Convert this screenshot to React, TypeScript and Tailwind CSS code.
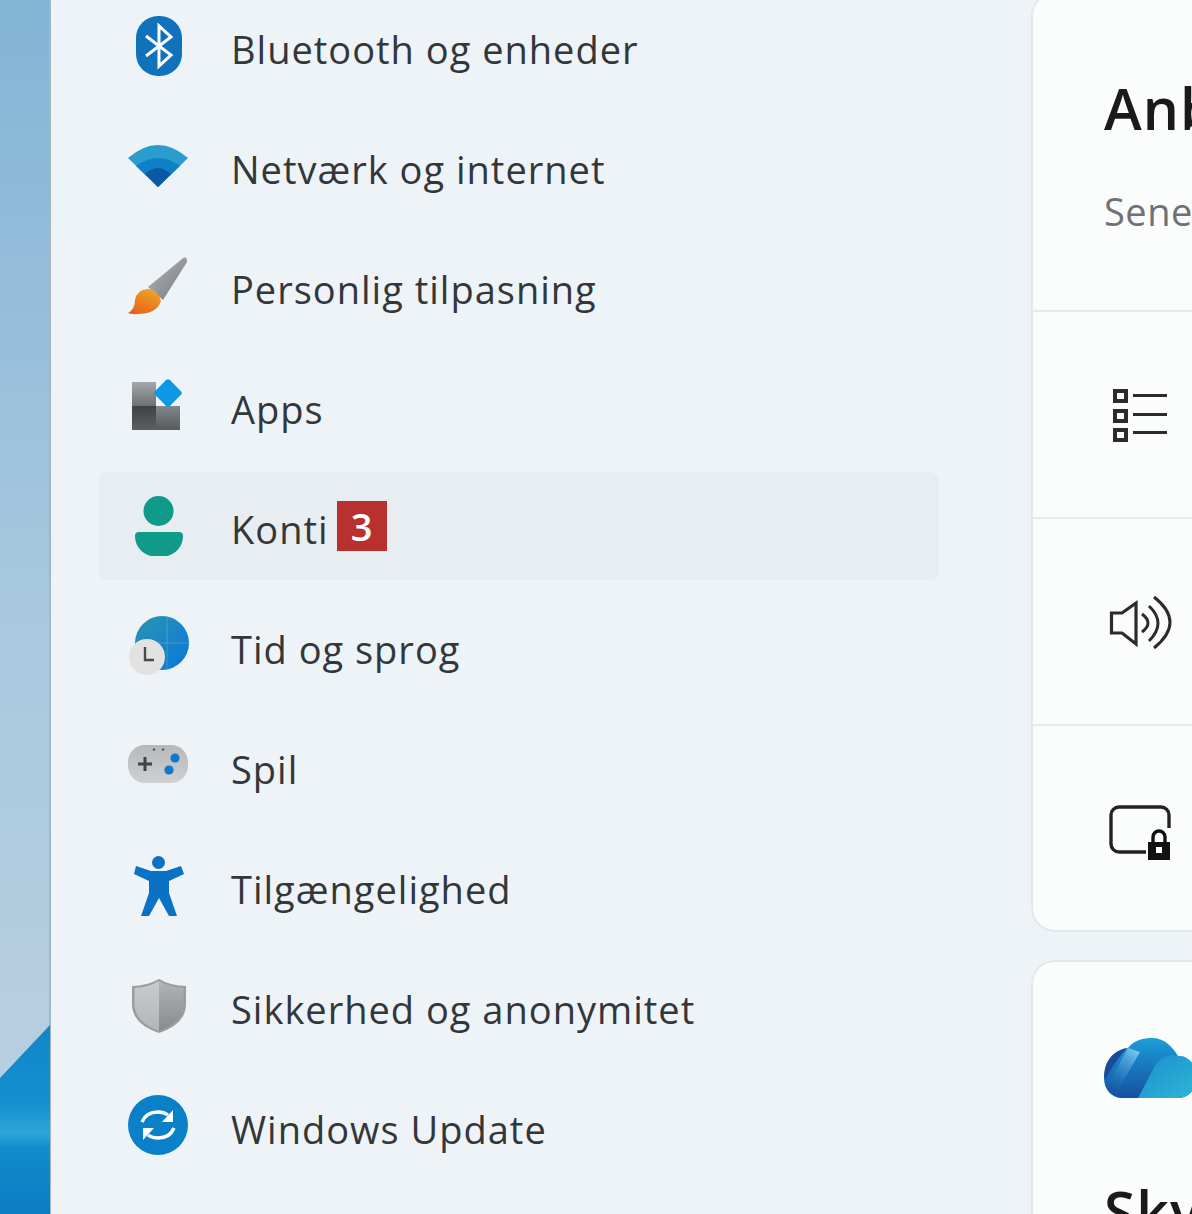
import React from "react";

const Svg = ({ children }: { children: React.ReactNode }) => (
  <svg width="64" height="64" viewBox="0 0 64 64" className="shrink-0 overflow-visible">{children}</svg>
);

const Bluetooth = () => (
  <Svg>
    <rect x="9" y="2" width="46" height="60" rx="22" fill="#0f72ba" />
    <path d="M19 22 L44 41 L32 52 V12 L44 23 L19 42" fill="none" stroke="#fff" strokeWidth="3" />
  </Svg>
);
const Wifi = () => (
  <Svg>
    <path d="M1 24 Q31 -2 61 24 L31 53Z" fill="#2a9dcc" />
    <path d="M9 32 Q31 16 53 32 L31 53Z" fill="#0f80c6" />
    <path d="M18 40 Q31 28 44 40 L31 53Z" fill="#0a58a6" />
  </Svg>
);
const Brush = () => (
  <Svg>
    <defs>
      <linearGradient id="bh" x1="0" y1="0" x2="1" y2="1">
        <stop offset="0" stopColor="#b5b7b9" />
        <stop offset="1" stopColor="#75797c" />
      </linearGradient>
      <linearGradient id="bb" x1="0.7" y1="0" x2="0.2" y2="1">
        <stop offset="0" stopColor="#eda428" />
        <stop offset="1" stopColor="#e8601a" />
      </linearGradient>
    </defs>
    <path d="M21 33 L55 5 Q60 1 60 8 L36 46 Z" fill="url(#bh)" />
    <path d="M20 35 Q30 34 34 47 Q30 60 10 60 Q4 60.5 1 59 Q8 55 8 46 Q10 36 20 35Z" fill="url(#bb)" />
  </Svg>
);
const Apps = () => (
  <Svg>
    <defs>
      <linearGradient id="a1" x1="0" y1="0" x2="0" y2="1">
        <stop offset="0" stopColor="#a3a7aa" />
        <stop offset="1" stopColor="#6d7174" />
      </linearGradient>
      <linearGradient id="a2" x1="0" y1="0" x2="0" y2="1">
        <stop offset="0" stopColor="#3e4245" />
        <stop offset="1" stopColor="#5b5f62" />
      </linearGradient>
      <linearGradient id="a3" x1="0" y1="0" x2="0" y2="1">
        <stop offset="0" stopColor="#82878a" />
        <stop offset="1" stopColor="#565a5d" />
      </linearGradient>
    </defs>
    <rect x="5" y="8" width="24" height="24" fill="url(#a1)" />
    <rect x="5" y="32" width="24" height="24" fill="url(#a2)" />
    <rect x="29" y="32" width="24" height="24" fill="url(#a3)" />
    <rect x="30.5" y="8.5" width="21" height="21" rx="3" transform="rotate(45 41 19)" fill="#0e98e6" />
  </Svg>
);
const Person = () => (
  <Svg>
    <circle cx="31.5" cy="17" r="15" fill="#0f9a8a" />
    <path d="M8 42 Q8 38 12 38 H52 Q56 38 56 42 C56 54 46 62 38 62 H26 C18 62 8 54 8 42Z" fill="#0f9a8a" />
  </Svg>
);
const Clock = () => (
  <Svg>
    <defs>
      <linearGradient id="g1" x1="0" y1="0" x2="1" y2="1">
        <stop offset="0" stopColor="#2a96b4" />
        <stop offset="1" stopColor="#0a76d6" />
      </linearGradient>
    </defs>
    <circle cx="35" cy="29" r="27" fill="url(#g1)" />
    <path d="M8 29 H62 M40 2 V56" stroke="#7cc0e4" strokeOpacity="0.4" strokeWidth="1" fill="none" />
    <circle cx="20" cy="43" r="18" fill="#e2e2e2" />
    <path d="M18 33 V46 H27" fill="none" stroke="#4a4a4a" strokeWidth="2.4" />
  </Svg>
);
const Game = () => (
  <Svg>
    <defs>
      <linearGradient id="gp" x1="0" y1="0" x2="0" y2="1">
        <stop offset="0" stopColor="#b6b8ba" />
        <stop offset="1" stopColor="#cfd0d2" />
      </linearGradient>
    </defs>
    <rect x="1" y="11" width="60" height="38" rx="17" fill="url(#gp)" />
    <path d="M11 30 H25 M18 23 V37" stroke="#3e4345" strokeWidth="3" fill="none" />
    <circle cx="48" cy="24" r="4.6" fill="#0f78cc" />
    <circle cx="42" cy="36" r="4.6" fill="#0f78cc" />
    <circle cx="27" cy="15.5" r="1.2" fill="#555" />
    <circle cx="36" cy="15.5" r="1.2" fill="#555" />
  </Svg>
);
const Access = () => (
  <Svg>
    <circle cx="31.5" cy="8.5" r="6.5" fill="#0a72c4" />
    <path d="M9 12 L24 17 H39 L54 12 L57 20 L42 27 V39 L50 62 H42 L32 44 L22 62 H14 L22 39 V27 L7 20Z" fill="#0a72c4" />
  </Svg>
);
const Shield = () => (
  <Svg>
    <defs>
      <linearGradient id="s1" x1="0" y1="0" x2="0" y2="1">
        <stop offset="0" stopColor="#c9cbcd" />
        <stop offset="1" stopColor="#b3b5b7" />
      </linearGradient>
      <linearGradient id="s2" x1="0" y1="0" x2="0" y2="1">
        <stop offset="0" stopColor="#b2b4b6" />
        <stop offset="1" stopColor="#88898b" />
      </linearGradient>
    </defs>
    <path d="M32 5 Q44 12 59 12 V30 Q59 50 32 59 Q5 50 5 30 V12 Q20 12 32 5Z" fill="#9a9c9e" />
    <path d="M32 7 Q20 14 7.5 14 V30 Q7.5 48 32 57Z" fill="url(#s1)" />
    <path d="M32 7 Q44 14 56.5 14 V30 Q56.5 48 32 57Z" fill="url(#s2)" />
  </Svg>
);
const Update = () => (
  <Svg>
    <circle cx="31" cy="31" r="30" fill="#0a80c8" />
    <path d="M15 28 Q19 18 31 18 Q37 18 41 21" fill="none" stroke="#fff" strokeWidth="3.4" />
    <path d="M47 34 Q43 44 31 44 Q25 44 21 41" fill="none" stroke="#fff" strokeWidth="3.4" />
    <path d="M46 16 V28 H35Z" fill="#fff" />
    <path d="M16 46 V34 H27Z" fill="#fff" />
  </Svg>
);

const RowSvg = ({ children }: { children: React.ReactNode }) => (
  <svg width="72" height="72" viewBox="0 0 72 72" className="shrink-0 overflow-visible">{children}</svg>
);

const items: { icon: React.ReactNode; label: string; active?: boolean }[] = [
  { icon: <Bluetooth />, label: "Bluetooth og enheder" },
  { icon: <Wifi />, label: "Netværk og internet" },
  { icon: <Brush />, label: "Personlig tilpasning" },
  { icon: <Apps />, label: "Apps" },
  { icon: <Person />, label: "Konti", active: true },
  { icon: <Clock />, label: "Tid og sprog" },
  { icon: <Game />, label: "Spil" },
  { icon: <Access />, label: "Tilgængelighed" },
  { icon: <Shield />, label: "Sikkerhed og anonymitet" },
  { icon: <Update />, label: "Windows Update" },
];

export default function App() {
  return (
    <div className="flex w-[1192px] h-[1214px] overflow-hidden bg-[#eef3f7] font-['Open_Sans',sans-serif] text-[#33373a]">
      <div className="w-[51px] shrink-0 h-full bg-gradient-to-b from-[#82b4d6] via-[#a9c8de] to-[#bbd1e1] border-r-2 border-[#a3b6c4]">
        <svg width="49" height="1214" viewBox="0 0 49 1214" className="block overflow-visible">
          <defs>
            <linearGradient id="wing" x1="0" y1="0" x2="0" y2="1">
              <stop offset="0" stopColor="#0f86c8" />
              <stop offset="0.42" stopColor="#1590cf" />
              <stop offset="0.57" stopColor="#2ea6db" />
              <stop offset="0.65" stopColor="#118ccc" />
              <stop offset="1" stopColor="#0d7cc2" />
            </linearGradient>
          </defs>
          <path d="M50 1025 L0 1078 V1214 H50Z" fill="url(#wing)" />
        </svg>
      </div>

      <nav className="w-[980px] shrink-0 -mt-[14px] pl-[47px] pr-[92px]">
        {items.map((it) => (
          <div key={it.label} className="h-[120px] py-[6px]">
            <div className={`h-[108px] flex items-center pl-[29px] rounded-[10px] ${it.active ? "bg-[#e8edf1]" : ""}`}>
              {it.icon}
              <span className="ml-[40px] pt-[6px] text-[38px] leading-none tracking-[1px] whitespace-nowrap">{it.label}</span>
              {it.active && (
                <span className="ml-[8px] w-[50px] h-[50px] flex items-center justify-center bg-[#b8312f] text-white text-[38px] font-semibold leading-none">3</span>
              )}
            </div>
          </div>
        ))}
      </nav>

      <div className="w-[500px] shrink-0 -mt-[8px] flex flex-col gap-[28px]">
        <section className="h-[940px] shrink-0 rounded-[24px] bg-[#fbfdfd] border-2 border-[#e1e9ec] flex flex-col">
          <header className="h-[316px] shrink-0 pl-[71px] pt-[78px] whitespace-nowrap">
            <h2 className="text-[57px] leading-[72px] tracking-[1px] font-semibold text-[#1a1a1a]">Anbefalede indstillinger</h2>
            <p className="mt-[42px] text-[38px] leading-[50px] tracking-[0.5px] text-[#6e7275]">Seneste og ofte brugte indstillinger</p>
          </header>
          <div className="h-[207px] border-t-2 border-[#e6ecee] flex items-center pl-[71px]">
            <RowSvg>
              <g fill="none" stroke="#2b2b2b">
                <rect x="11" y="12" width="11" height="10" strokeWidth="4" />
                <rect x="11" y="32" width="11" height="10" strokeWidth="4" />
                <rect x="11" y="51" width="11" height="10" strokeWidth="4" />
                <path d="M29 16.5 H63 M29 35.5 H63 M29 53.5 H63" strokeWidth="3" />
              </g>
            </RowSvg>
          </div>
          <div className="h-[207px] border-t-2 border-[#e6ecee] flex items-center pl-[71px]">
            <RowSvg>
              <g fill="none" stroke="#2b2b2b" strokeWidth="3">
                <path d="M7.5 27 H18 L32 17 V58 L18 47 H7.5Z" strokeWidth="3.2" />
                <path d="M38 28 Q50 37 38 46" />
                <path d="M45 20 Q63 37 45 55" />
                <path d="M50 11 Q82 36 50 62" />
              </g>
            </RowSvg>
          </div>
          <div className="h-[205px] border-t-2 border-[#e6ecee] flex items-center pl-[71px]">
            <RowSvg>
              <path d="M42 60 H15 a8 8 0 0 1 -8 -8 V23 a8 8 0 0 1 8 -8 H57 a8 8 0 0 1 8 8 V36" fill="none" stroke="#222" strokeWidth="3.4" />
              <path d="M44 50 H66 V68 H44Z" fill="#111" />
              <path d="M49 50 V45 a6 6 0 0 1 12 0 V50" fill="none" stroke="#111" strokeWidth="3.4" />
              <rect x="52" y="55" width="6" height="6" fill="#fff" />
            </RowSvg>
          </div>
        </section>

        <section className="h-[400px] shrink-0 rounded-[24px] bg-[#fbfdfd] border-2 border-[#e1e9ec] pl-[71px] pt-[76px]">
          <svg width="92" height="62" viewBox="0 0 92 62" className="block overflow-visible">
            <defs>
              <linearGradient id="c1" x1="0.3" y1="0" x2="0.3" y2="1">
                <stop offset="0" stopColor="#1c9ed8" />
                <stop offset="1" stopColor="#1450a0" />
              </linearGradient>
              <linearGradient id="c2" x1="0" y1="0" x2="1" y2="1">
                <stop offset="0" stopColor="#1e8cd0" />
                <stop offset="1" stopColor="#2bb8d4" />
              </linearGradient>
              <linearGradient id="c3" x1="0.8" y1="0" x2="0.2" y2="1">
                <stop offset="0" stopColor="#7cc6ea" />
                <stop offset="1" stopColor="#1f78c4" stopOpacity="0" />
              </linearGradient>
            </defs>
            <path d="M0 40 C0 24 10 12 24 10 C30 2 40 0 48 0 C60 0 68 8 74 18 C86 18 92 28 92 40 C92 52 84 60 74 60 H18 C8 60 0 52 0 40Z" fill="url(#c1)" />
            <path d="M23 10 C10 12 -2 24 1 42 Q10 24 23 10Z" fill="#1a4a9c" />
            <path d="M24 10 L4 46 L14 52 L36 14Z" fill="url(#c3)" />
            <path d="M34 60 L52 26 C58 18 68 16 74 18 C86 18 92 28 92 40 C92 52 84 60 74 60Z" fill="url(#c2)" />
          </svg>
          <h2 className="mt-[75px] text-[57px] leading-[72px] tracking-[1px] font-semibold text-[#1a1a1a] whitespace-nowrap">Skylager</h2>
        </section>
      </div>
    </div>
  );
}
